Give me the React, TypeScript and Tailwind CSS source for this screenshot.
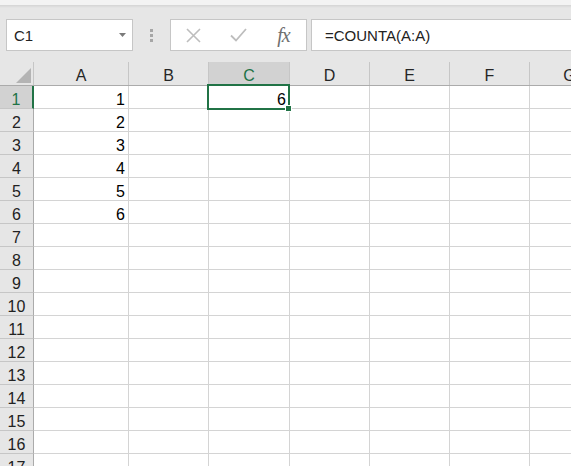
import React from "react";

const letters = ["A", "B", "C", "D", "E", "F", "G"];
const colW = ["w-[95px]", "w-[80px]", "w-[81px]", "w-[80px]", "w-[80px]", "w-[80px]", "w-[80px]"];
const data: Record<string, string> = {
  "1-0": "1",
  "2-0": "2",
  "3-0": "3",
  "4-0": "4",
  "5-0": "5",
  "6-0": "6",
  "1-2": "6",
};

export default function App() {
  const rows = Array.from({ length: 17 }, (_, i) => i + 1);
  return (
    <div className="w-[571px] h-[466px] overflow-hidden bg-[#e6e6e6] font-['Liberation_Sans',Arial,sans-serif] text-black">
      {/* top strip */}
      <div className="h-[5px] bg-[#f3f3f3]" />
      <div className="h-[3px] bg-gradient-to-b from-[#d4d4d4] to-[#e6e6e6]" />
      {/* formula toolbar */}
      <div className="h-[54px] flex items-start pt-[11px] pl-[6px]">
        <div className="w-[127px] h-[32px] shrink-0 bg-white border border-[#c6c6c6] flex items-center justify-between pl-[7px] pr-[6px]">
          <span className="text-[15px] leading-none text-[#222]">C1</span>
          <svg width="7" height="4" viewBox="0 0 7 4">
            <path d="M0 0H7L3.5 4Z" fill="#7a7a7a" />
          </svg>
        </div>
        <div className="w-[37px] h-[32px] shrink-0 flex flex-col items-center justify-center gap-[2px]">
          <div className="w-[3px] h-[3px] bg-[#a6a6a6]" />
          <div className="w-[3px] h-[3px] bg-[#a6a6a6]" />
          <div className="w-[3px] h-[3px] bg-[#a6a6a6]" />
        </div>
        <div className="w-[137px] h-[32px] shrink-0 bg-white border border-[#c6c6c6] flex">
          <div className="w-[45px] h-full flex items-center justify-center">
            <svg width="15" height="15" viewBox="0 0 15 15">
              <path d="M1 1L14 14M14 1L1 14" stroke="#bdbdbd" strokeWidth="1.6" fill="none" />
            </svg>
          </div>
          <div className="w-[45px] h-full flex items-center justify-center">
            <svg width="17" height="14" viewBox="0 0 17 14">
              <path d="M1 7.5L6 12.5L16 1" stroke="#bdbdbd" strokeWidth="1.8" fill="none" />
            </svg>
          </div>
          <div className="w-[45px] h-full flex items-center justify-center">
            <span className="font-['Liberation_Serif',serif] italic text-[20px] leading-none text-[#707070] tracking-[-1px]">
              fx
            </span>
          </div>
        </div>
        <div className="w-[4px] shrink-0" />
        <div className="w-[300px] h-[32px] shrink-0 bg-white border border-[#c6c6c6] flex items-center pl-[13px]">
          <span className="text-[15px] leading-none text-[#222]">=COUNTA(A:A)</span>
        </div>
      </div>
      {/* grid */}
      <div className="relative">
        <div className="flex h-[24px] w-[610px] border-b border-[#ababab]">
          <div className="w-[34px] shrink-0 border-r border-[#c6c6c6] flex items-end justify-end pr-[2px] pb-[2px]">
            <svg width="15" height="15" viewBox="0 0 15 15">
              <path d="M15 0V15H0Z" fill="#b4b4b4" />
            </svg>
          </div>
          {letters.map((l, ci) => (
            <div
              key={l}
              className={`${colW[ci]} shrink-0 border-r border-[#c6c6c6] flex items-end justify-center pb-[1px] text-[16px] leading-[16px] ${
                l === "C" ? "bg-[#d2d2d2] text-[#217346]" : "text-[#262626]"
              }`}
            >
              {l}
            </div>
          ))}
        </div>
        {rows.map((r) => (
          <div key={r} className="flex h-[23px] w-[610px]">
            <div
              className={`w-[34px] shrink-0 border-b border-[#c6c6c6] flex items-end justify-center text-[16px] leading-[16px] ${
                r === 1
                  ? "bg-[#d2d2d2] text-[#217346] border-r-2 border-r-[#217346]"
                  : "bg-[#e6e6e6] text-[#222] border-r border-r-[#ababab]"
              }`}
            >
              {r}
            </div>
            {letters.map((l, ci) => (
              <div
                key={l}
                className={`${colW[ci]} shrink-0 bg-white border-r border-b border-[#d4d4d4] flex items-end justify-end pr-[3px] text-[16px] leading-[16px] text-black`}
              >
                {data[`${r}-${ci}`] ?? ""}
              </div>
            ))}
          </div>
        ))}
        {/* selection */}
        <div className="absolute left-[207px] top-[22px] w-[83px] h-[26px] border-2 border-[#217346] pointer-events-none" />
        <div className="absolute left-[285px] top-[43px] w-[7px] h-[7px] bg-[#217346] border border-white" />
      </div>
    </div>
  );
}
